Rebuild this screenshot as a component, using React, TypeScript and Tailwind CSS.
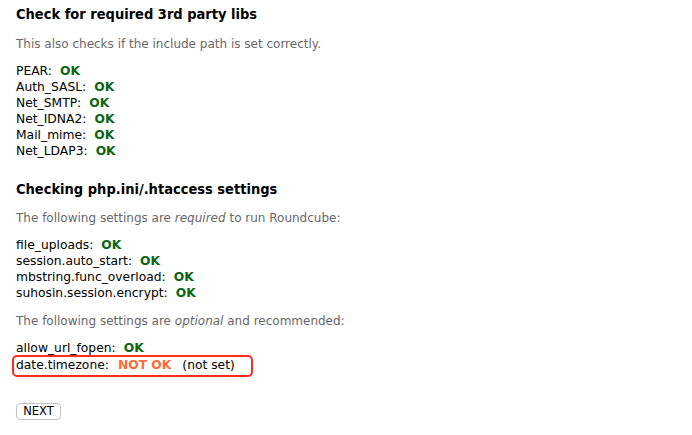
const font = { fontFamily: '"DejaVu Sans", Verdana, sans-serif' }
const headFont = { fontFamily: '"DejaVu Sans Condensed", "DejaVu Sans", Verdana, sans-serif' }

function Row({ name, ok = true, note }: { name: string; ok?: boolean; note?: string }) {
  return (
    <div className="h-4 leading-4 whitespace-nowrap text-[12.3px]">
      {name}:
      {ok ? (
        <span className="ml-[8px] font-bold text-[#0a6614]">OK</span>
      ) : (
        <span className="ml-[9px] font-bold text-[#ff6a3a]">NOT OK</span>
      )}
      {note && <span className="ml-[11px]">({note})</span>}
    </div>
  )
}

export default function App() {
  return (
    <div className="w-[692px] h-[435px] bg-white text-black overflow-hidden px-4 text-[12px]" style={font}>
      <h3 className="pt-[5px] text-[14.5px] font-bold leading-[18px]" style={headFont}>
        Check for required 3rd party libs
      </h3>
      <p className="mt-[13px] leading-4 text-[#67676c]">This also checks if the include path is set correctly.</p>

      <div className="mt-[11px]">
        <Row name="PEAR" />
        <Row name="Auth_SASL" />
        <Row name="Net_SMTP" />
        <Row name="Net_IDNA2" />
        <Row name="Mail_mime" />
        <Row name="Net_LDAP3" />
      </div>

      <h3 className="mt-[21px] text-[14.5px] font-bold leading-[18px]" style={headFont}>
        Checking php.ini/.htaccess settings
      </h3>
      <p className="mt-[12px] leading-4 text-[#67676c]">
        The following settings are <em>required</em> to run Roundcube:
      </p>

      <div className="mt-[11px]">
        <Row name="file_uploads" />
        <Row name="session.auto_start" />
        <Row name="mbstring.func_overload" />
        <Row name="suhosin.session.encrypt" />
      </div>

      <p className="mt-[12px] leading-4 text-[#67676c]">
        The following settings are <em>optional</em> and recommended:
      </p>

      <div className="mt-[11px]">
        <Row name="allow_url_fopen" />
        <div className="-ml-1 -mt-[1px] w-[241px] rounded-[5px] border-2 border-[#ff2b1c] pl-[2px] pb-[2px]">
          <Row name="date.timezone" ok={false} note="not set" />
        </div>
      </div>

      <button className="block mt-[26px] rounded-[4px] border border-[#c4c4c4] bg-white w-[45px] h-[17px] text-[11.5px] leading-[15px]">
        NEXT
      </button>
    </div>
  )
}
